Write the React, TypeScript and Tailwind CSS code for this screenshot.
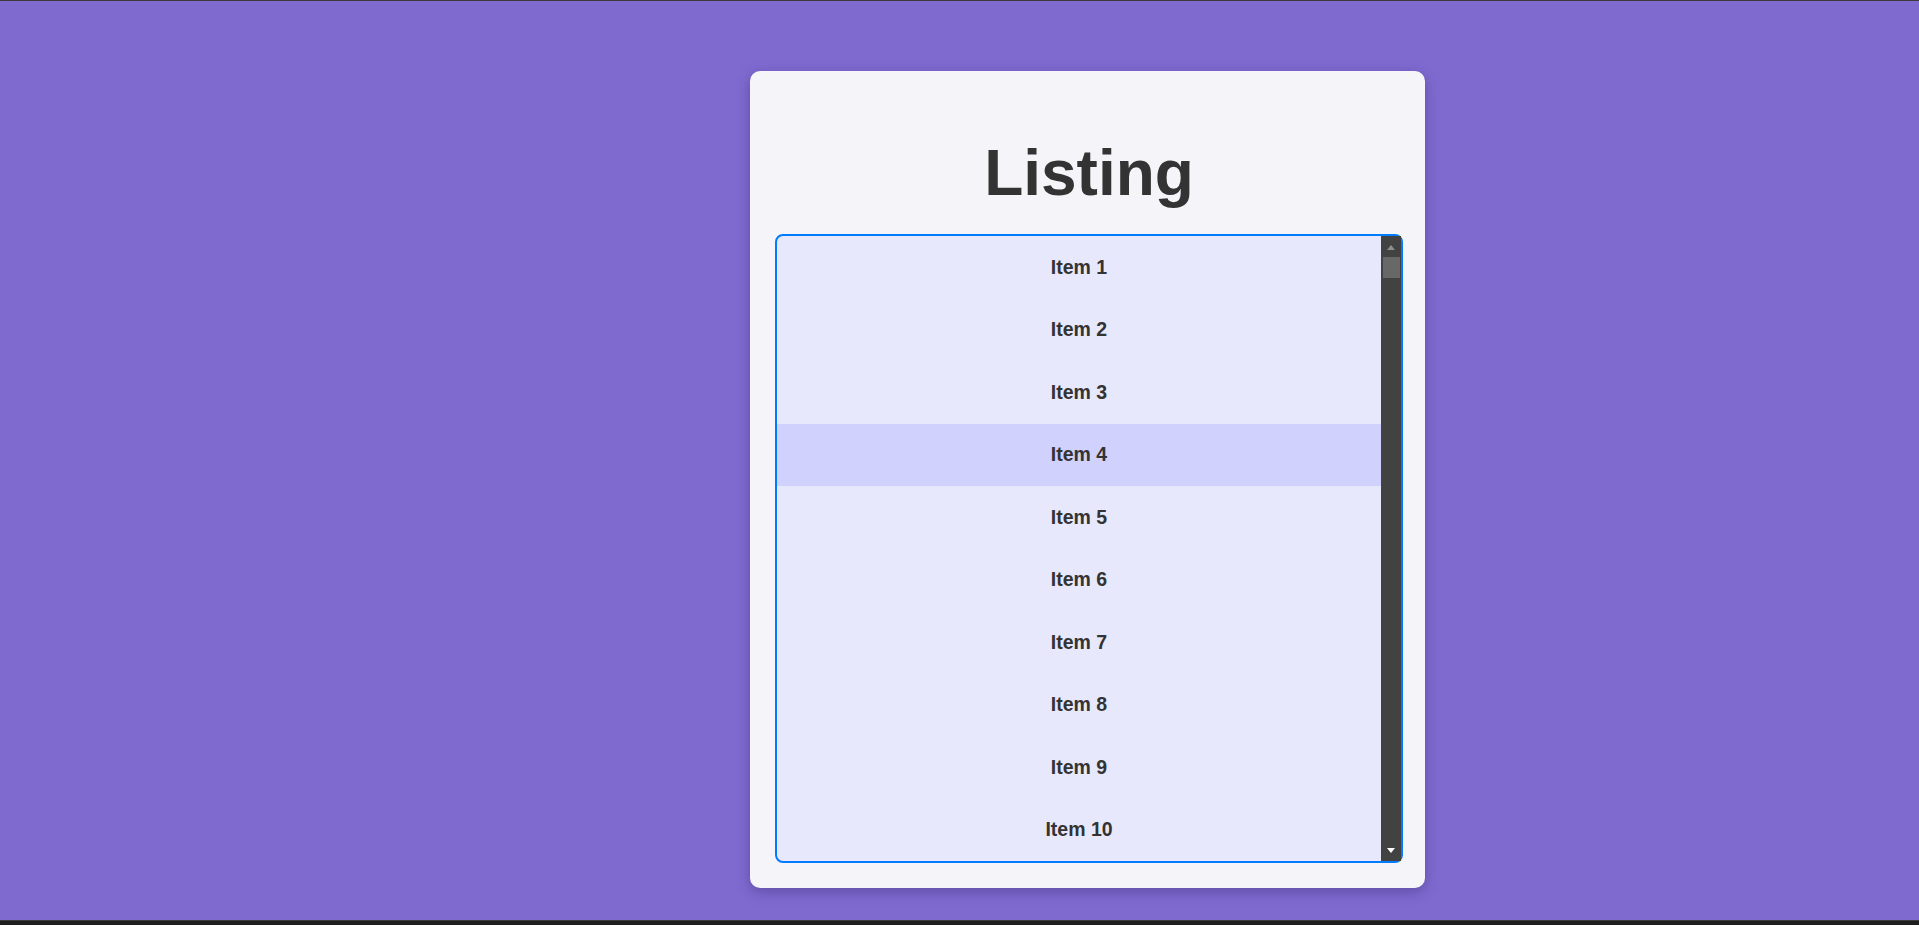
import React from "react";

const items = Array.from({ length: 10 }, (_, i) => `Item ${i + 1}`);

const App: React.FC = () => {
    return (
        <div className="h-screen flex flex-col bg-[#1f1f1f] font-['Liberation_Sans',Arial,sans-serif]">
            <div className="h-px bg-[#3a3a3a]"></div>
            <div className="flex-1 bg-[#7f6bd0] pt-[70px] pl-[750px]">
                <div className="w-[675px] bg-[#f4f4f9] rounded-[10px] shadow-[0_4px_14px_rgba(40,20,90,0.35)] pt-[66px] pb-[25px] pl-[25px]">
                    <h1 className="w-[628px] text-center text-[64px] leading-[72px] font-bold text-[#333333] mb-[25px]">
                        Listing
                    </h1>
                    <div className="w-[628px] h-[629px] border-2 border-[#007bff] rounded-lg bg-[#e8e8fd] flex">
                        <ul className="flex-1 overflow-hidden">
                            {items.map((item, index) => (
                                <li
                                    key={index}
                                    className={`h-[62.5px] flex items-center justify-center text-[19.5px] font-bold text-[#333333] ${index === 3 ? "bg-[#d1d1fe]" : ""}`}
                                >
                                    {item}
                                </li>
                            ))}
                        </ul>
                        {/* scrollbar */}
                        <div className="w-[20px] bg-[#424242] flex flex-col items-center">
                            <svg width="8" height="5" viewBox="0 0 8 5" className="mt-[9px]">
                                <polygon points="4,0 8,5 0,5" fill="#8e8e8e" />
                            </svg>
                            <div className="mt-[7px] w-[17px] h-[21px] bg-[#686868]"></div>
                            <div className="flex-1"></div>
                            <svg width="8" height="5" viewBox="0 0 8 5" className="mb-[8px]">
                                <polygon points="0,0 8,0 4,5" fill="#ffffff" />
                            </svg>
                        </div>
                    </div>
                </div>
            </div>
            <div className="h-[5px] bg-[#1f1f1f] border-t border-[#3c3c3c]"></div>
        </div>
    );
};

export default App;
